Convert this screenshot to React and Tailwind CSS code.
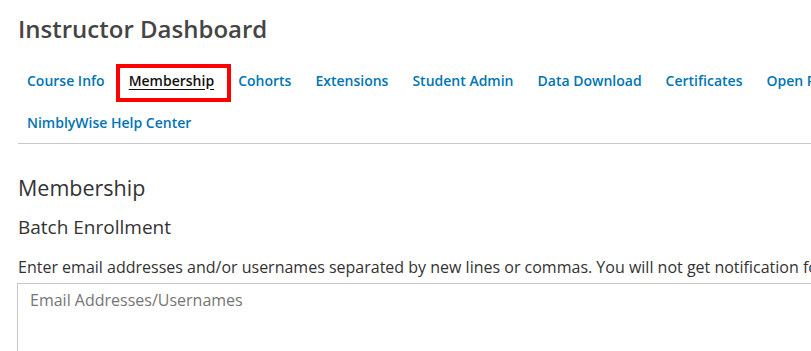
import React from "react";

const tabs = [
  "Course Info",
  "Membership",
  "Cohorts",
  "Extensions",
  "Student Admin",
  "Data Download",
  "Certificates",
  "Open Responses",
  "NimblyWise Help Center",
];

export default function App() {
  return (
    <div className="w-[811px] h-[351px] overflow-hidden bg-white" style={{ fontFamily: '"Open Sans", "Noto Sans", sans-serif' }}>
      <div className="w-[1100px] pl-[18px]">
        <h1 className="mt-[13px] text-[24px] leading-[32px] text-[#454545] font-semibold">Instructor Dashboard</h1>
        <div className="mt-[14px] border-b border-[#c8c8c8]">
          <nav className="flex flex-wrap w-[980px] pl-[9px] gap-x-[24px]">
            {tabs.map((t) => (
              <div key={t} className="relative h-[42px] flex items-center">
                {t === "Membership" ? (
                  <>
                    <span className="text-[14px] font-semibold text-[#111] underline underline-offset-[3px]">{t}</span>
                    <span className="absolute left-[-13px] right-[-17px] top-[5px] bottom-[-1px] border-[4px] border-[#f00]" />
                  </>
                ) : (
                  <span className="text-[14px] font-semibold text-[#0075b4]">{t}</span>
                )}
              </div>
            ))}
          </nav>
        </div>
        <h2 className="mt-[30px] text-[21.5px] leading-[28px] text-[#333]">Membership</h2>
        <h3 className="mt-[13px] text-[19px] leading-[24px] text-[#333]">Batch Enrollment</h3>
        <p className="mt-[16px] text-[16px] leading-[24px] text-[#333] whitespace-nowrap">
          Enter email addresses and/or usernames separated by new lines or commas. You will not get notification for emails that bounce, so please double-check spelling.
        </p>
        <textarea
          className="mt-[4px] -ml-px block w-[1000px] h-[120px] border border-[#c8c8c8] px-[12px] pt-[4px] text-[16px] leading-[24px] placeholder:text-[#767676] outline-none resize-none"
          placeholder="Email Addresses/Usernames"
        />
      </div>
    </div>
  );
}
